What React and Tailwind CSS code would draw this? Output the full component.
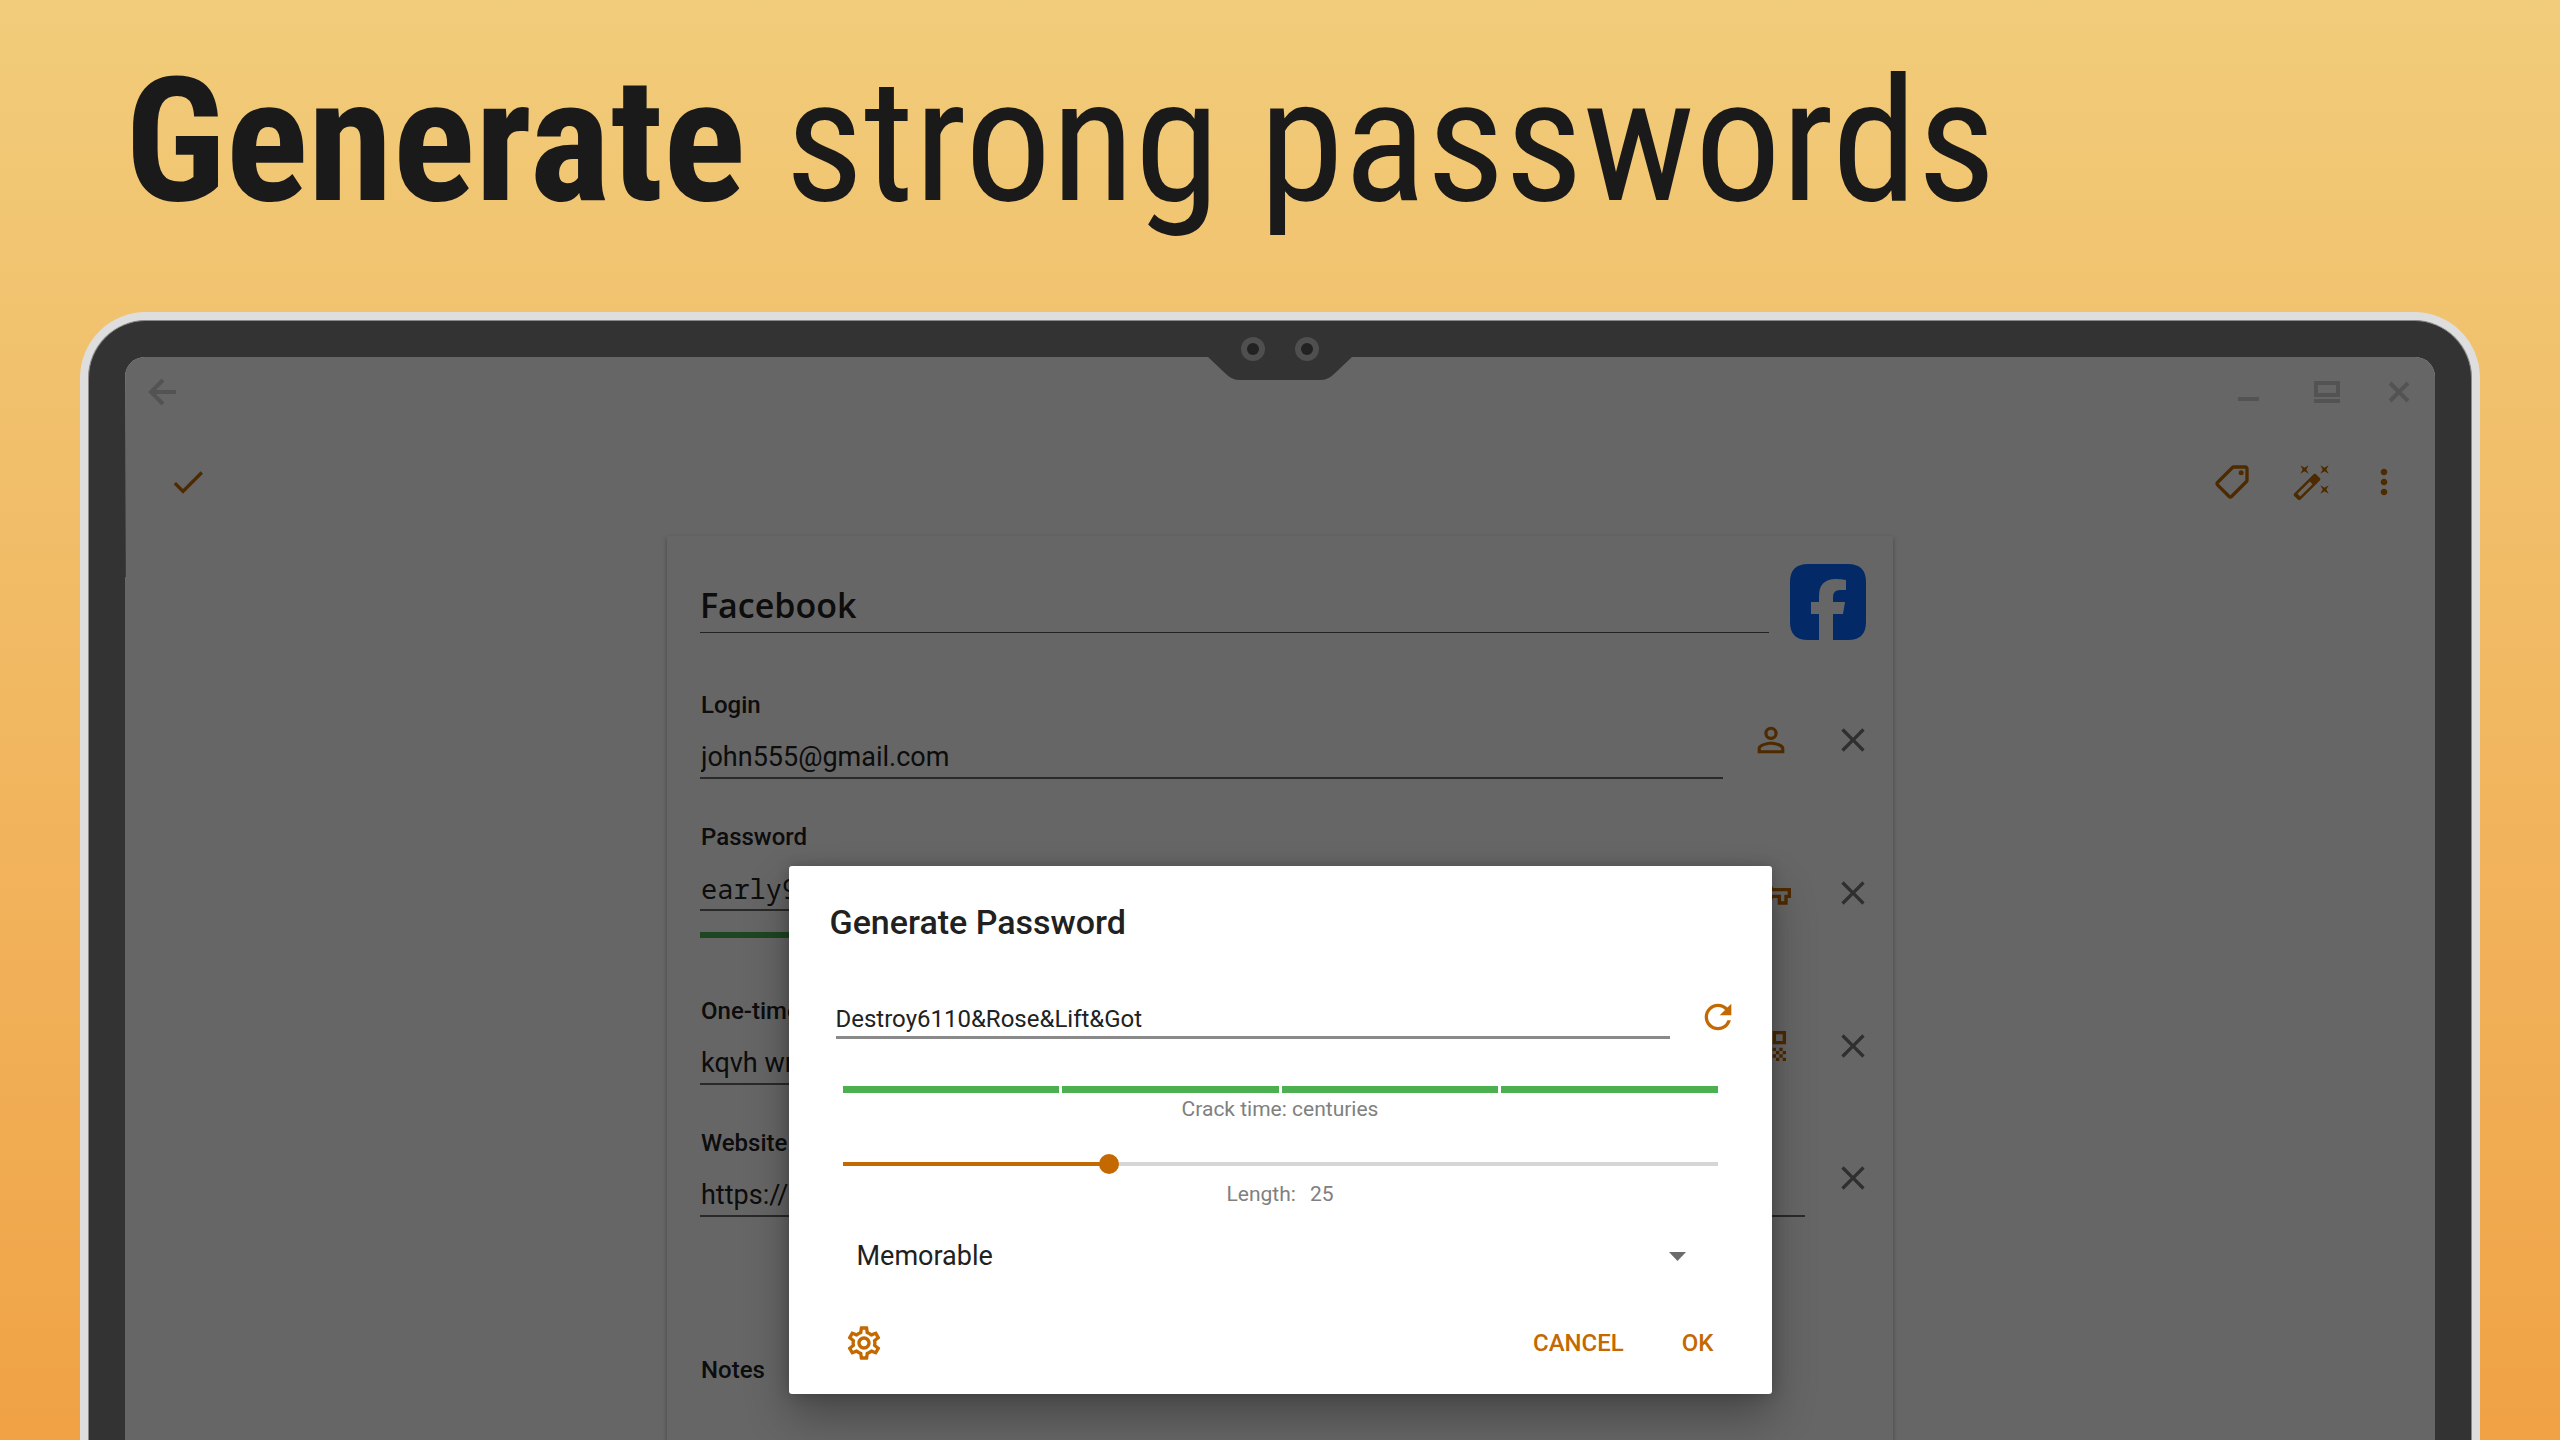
import { useState } from "react";
import {
  MdCheck,
  MdClose,
  MdMoreVert,
  MdOutlineLocalOffer,
  MdOutlineSettings,
  MdOutlineVpnKey,
  MdPersonOutline,
  MdQrCode,
  MdRefresh,
} from "react-icons/md";

function Notch() {
  return (
    <svg
      className="absolute top-0 left-1/2 h-[59px] w-36 -translate-x-1/2"
      viewBox="0 0 144 59"
      aria-hidden="true"
    >
      <path d="M0 36 L18 53 Q24 59 32 59 H112 Q120 59 126 53 L144 36 V20 H0 Z" fill="#333" />
      <circle cx="45" cy="28" r="12" fill="#4f4f4f" />
      <circle cx="45" cy="28" r="6" fill="#222" />
      <circle cx="99" cy="28" r="12" fill="#4f4f4f" />
      <circle cx="99" cy="28" r="6" fill="#222" />
    </svg>
  );
}

function WandIcon() {
  return (
    <svg className="size-10" viewBox="0 0 24 24" fill="currentColor" fillRule="evenodd" aria-hidden="true">
      <path d="M7.5 5.6 5 7l1.4-2.5L5 2l2.5 1.4L10 2 8.6 4.5 10 7ZM19.5 15.4 22 14l-1.4 2.5L22 19l-2.5-1.4L17 19l1.4-2.5L17 14ZM22 2l-1.4 2.5L22 7l-2.5-1.4L17 7l1.4-2.5L17 2l2.5 1.4Z" />
      <path d="M14.37 7.29l2.34 2.34c.39.37.39 1.02 0 1.41L5.04 22.71c-.39.39-1.04.39-1.41 0l-2.34-2.34c-.39-.37-.39-1.02 0-1.41L12.96 7.29c.39-.39 1.04-.39 1.41 0ZM10.7 11.7l1.6 1.6-7.4 7.4-1.6-1.6Z" />
    </svg>
  );
}

function LineIcon({ d }) {
  return (
    <svg className="size-10" viewBox="0 0 40 40" fill="none" stroke="currentColor" strokeWidth="4" aria-hidden="true">
      <path d={d} />
    </svg>
  );
}

function TitleBar() {
  return (
    <div className="flex h-[70px] shrink-0 items-center pr-4 pl-[17px] text-[#cfcfcf]">
      <button type="button" aria-label="Back" className="mr-auto">
        <LineIcon d="M34 20H10M21 8L9 20L21 32" />
      </button>
      <button type="button" aria-label="Minimize" className="mr-[38px]">
        <LineIcon d="M9 27H30" />
      </button>
      <button type="button" aria-label="Maximize" className="mr-8">
        <LineIcon d="M9 11H31V23H9ZM7 29H33" />
      </button>
      <button type="button" aria-label="Close window">
        <LineIcon d="M11 11L29 29M29 11L11 29" />
      </button>
    </div>
  );
}

function Toolbar() {
  return (
    <div className="flex h-[109px] shrink-0 items-center gap-10 pr-[39px] pl-[43px] text-[#c36900]">
      <button type="button" aria-label="Save" className="mr-auto">
        <MdCheck className="size-10" />
      </button>
      <button type="button" aria-label="Labels">
        <MdOutlineLocalOffer className="size-10 -scale-x-100" />
      </button>
      <button type="button" aria-label="Auto fill">
        <WandIcon />
      </button>
      <button type="button" aria-label="More" className="flex w-6 justify-center">
        <MdMoreVert className="size-10 shrink-0" />
      </button>
    </div>
  );
}

function Field({ id, label, value, mono, strength, action: Action, actionLabel }) {
  return (
    <div className={strength ? "flex items-center pr-5 pb-[15px]" : "flex items-center pr-5"}>
      <div className="flex flex-1 flex-col">
        <label htmlFor={id} className="pl-px text-2xl leading-7 font-medium">
          {label}
        </label>
        <input
          id={id}
          defaultValue={value}
          className={
            mono
              ? "h-[60px] w-full border-b-2 border-[#666] pt-4 pl-px font-['Noto_Sans_Mono','DejaVu_Sans_Mono',monospace] text-[27px] outline-none"
              : "h-[60px] w-full border-b-2 border-[#666] pt-[18px] pl-px text-[27px] outline-none"
          }
        />
        {strength && <div className="mt-[21px] h-1.5 bg-[#4caf50]" />}
      </div>
      <div className={strength ? "ml-7 flex gap-[42px] pt-6" : "ml-7 flex gap-[42px] pt-2.5"}>
        {Action && (
          <button type="button" aria-label={actionLabel} className="text-[#c36900]">
            <Action className="size-10" />
          </button>
        )}
        <button type="button" aria-label={`Remove ${label}`} className="text-[#757575]">
          <MdClose className="size-10" />
        </button>
      </div>
    </div>
  );
}

function EntryCard() {
  return (
    <section className="mx-auto w-full max-w-[1226px] flex-1 bg-white pt-7 pl-[33px] shadow-[0_2px_5px_rgba(0,0,0,0.3)]">
      <div className="flex items-end gap-[21px] pr-[27px]">
        <input
          aria-label="Title"
          defaultValue="Facebook"
          className="mb-[7px] h-[60px] min-w-0 flex-1 border-b border-[#555] pt-1 font-['Open_Sans',sans-serif] text-[34px] font-semibold outline-none"
        />
        <svg className="size-[76px]" viewBox="0 0 76 76" aria-label="Facebook logo" role="img">
          <path
            fill="#0866ff"
            d="M18 0H58Q76 0 76 18V58Q76 76 58 76H43V50H53L55 38H43V33Q43 26 50 26H56V16Q51 15 46 15Q29 15 29 32V38H21V50H29V76H18Q0 76 0 58V18Q0 0 18 0Z"
          />
        </svg>
      </div>
      <div className="mt-[51px] flex flex-col gap-11">
        <Field id="login" label="Login" value="john555@gmail.com" action={MdPersonOutline} actionLabel="Choose login" />
        <Field id="password" label="Password" value="early9Story&Moon" mono strength action={MdOutlineVpnKey} actionLabel="Generate password" />
        <Field id="otp" label="One-time password" value="kqvh wmzt 4r2p" action={MdQrCode} actionLabel="Scan code" />
        <Field id="website" label="Website" value="https://www.facebook.com" />
        <label htmlFor="notes" className="mt-[95px] pl-px text-2xl leading-7 font-medium">
          Notes
        </label>
        <textarea id="notes" rows={2} className="resize-none outline-none" />
      </div>
    </section>
  );
}

function GenerateDialog() {
  const min = 1;
  const max = 81;
  const [length, setLength] = useState(25);
  return (
    <div
      role="dialog"
      aria-labelledby="dialog-title"
      className="w-3/4 max-w-[983px] rounded-[3px] bg-white pt-9 pb-[31px] shadow-[0_22px_44px_rgba(0,0,0,0.3),0_0_14px_rgba(0,0,0,0.2)]"
    >
      <h2 id="dialog-title" className="pl-[41px] text-[34px] leading-10 font-medium">
        Generate Password
      </h2>
      <div className="mt-[55px] flex items-start gap-7 pr-[34px] pl-[47px]">
        <input
          aria-label="Generated password"
          defaultValue="Destroy6110&Rose&Lift&Got"
          className="h-[42px] min-w-0 flex-1 border-b-[3px] border-[#8a8a8a] pt-1 text-2xl outline-none"
        />
        <button type="button" aria-label="Regenerate" className="text-[#c36900]">
          <MdRefresh className="size-10" />
        </button>
      </div>
      <div className="px-[54px] text-center text-[21px] leading-7 text-[#808080]">
        <div className="mt-[47px] grid h-[7px] grid-cols-4 gap-[3px]">
          <span className="bg-[#4caf50]" />
          <span className="bg-[#4caf50]" />
          <span className="bg-[#4caf50]" />
          <span className="bg-[#4caf50]" />
        </div>
        <p className="mt-0.5">Crack time: centuries</p>
        <input
          id="length"
          type="range"
          min={min}
          max={max}
          value={length}
          onChange={(e) => setLength(Number(e.target.value))}
          style={{ "--fill": `${((length - min) / (max - min)) * 100}%` }}
          className="mt-[31px] block h-5 w-full appearance-none bg-transparent [&::-webkit-slider-runnable-track]:h-1 [&::-webkit-slider-runnable-track]:bg-[linear-gradient(to_right,#c36900_var(--fill),#d6d6d6_var(--fill))] [&::-webkit-slider-thumb]:-mt-2 [&::-webkit-slider-thumb]:size-5 [&::-webkit-slider-thumb]:appearance-none [&::-webkit-slider-thumb]:rounded-full [&::-webkit-slider-thumb]:bg-[#c36900]"
        />
        <p className="mt-1.5 flex justify-center gap-3.5">
          <label htmlFor="length">Length:</label>
          <output htmlFor="length">{length}</output>
        </p>
      </div>
      <div className="mt-7 grid items-center pr-[86px] pl-[68px]">
        <select
          aria-label="Password type"
          defaultValue="Memorable"
          className="col-start-1 row-start-1 h-10 w-full appearance-none bg-transparent text-[27px] outline-none"
        >
          <option>Memorable</option>
          <option>Random</option>
          <option>PIN</option>
        </select>
        <svg className="pointer-events-none col-start-1 row-start-1 h-[9px] w-[17px] justify-self-end" viewBox="0 0 17 9" aria-hidden="true">
          <path d="M0 0H17L8.5 9Z" fill="#6b6b6b" />
        </svg>
      </div>
      <div className="mt-[47px] flex items-center gap-[58px] pr-[58px] pl-[55px] text-2xl font-medium text-[#c36900]">
        <button type="button" aria-label="Settings" className="mr-auto">
          <MdOutlineSettings className="size-10" />
        </button>
        <button type="button">CANCEL</button>
        <button type="button">OK</button>
      </div>
    </div>
  );
}

export default function App() {
  return (
    <main className="flex h-screen flex-col overflow-hidden bg-linear-to-b from-[#f1cc7a] to-[#f0a245] pt-[55px] font-['Roboto',sans-serif] text-[#212121]">
      <h1 className="mb-[85px] pl-[125px] font-['Roboto_Condensed','Roboto',sans-serif] text-[172px] leading-none whitespace-nowrap text-[#1a1a1a]">
        <strong className="font-bold">Generate</strong> strong passwords
      </h1>
      <div className="mx-20 flex min-h-0 flex-1 rounded-t-[66px] bg-[#dedede] px-2 pt-2">
        <div className="relative flex min-w-0 flex-1 rounded-t-[58px] border-x border-t border-[#8a8a8a] bg-[#333] px-9 pt-9">
          <div className="relative flex min-w-0 flex-1 flex-col overflow-hidden rounded-t-[20px] bg-white">
            <TitleBar />
            <Toolbar />
            <EntryCard />
            <div className="absolute inset-0 flex items-start justify-center bg-black/60 pt-[509px]">
              <GenerateDialog />
            </div>
            <div className="absolute top-5 left-0 h-[200px] w-px bg-linear-to-b from-[#5272a8] to-[#333a55]" />
          </div>
          <Notch />
        </div>
      </div>
    </main>
  );
}
